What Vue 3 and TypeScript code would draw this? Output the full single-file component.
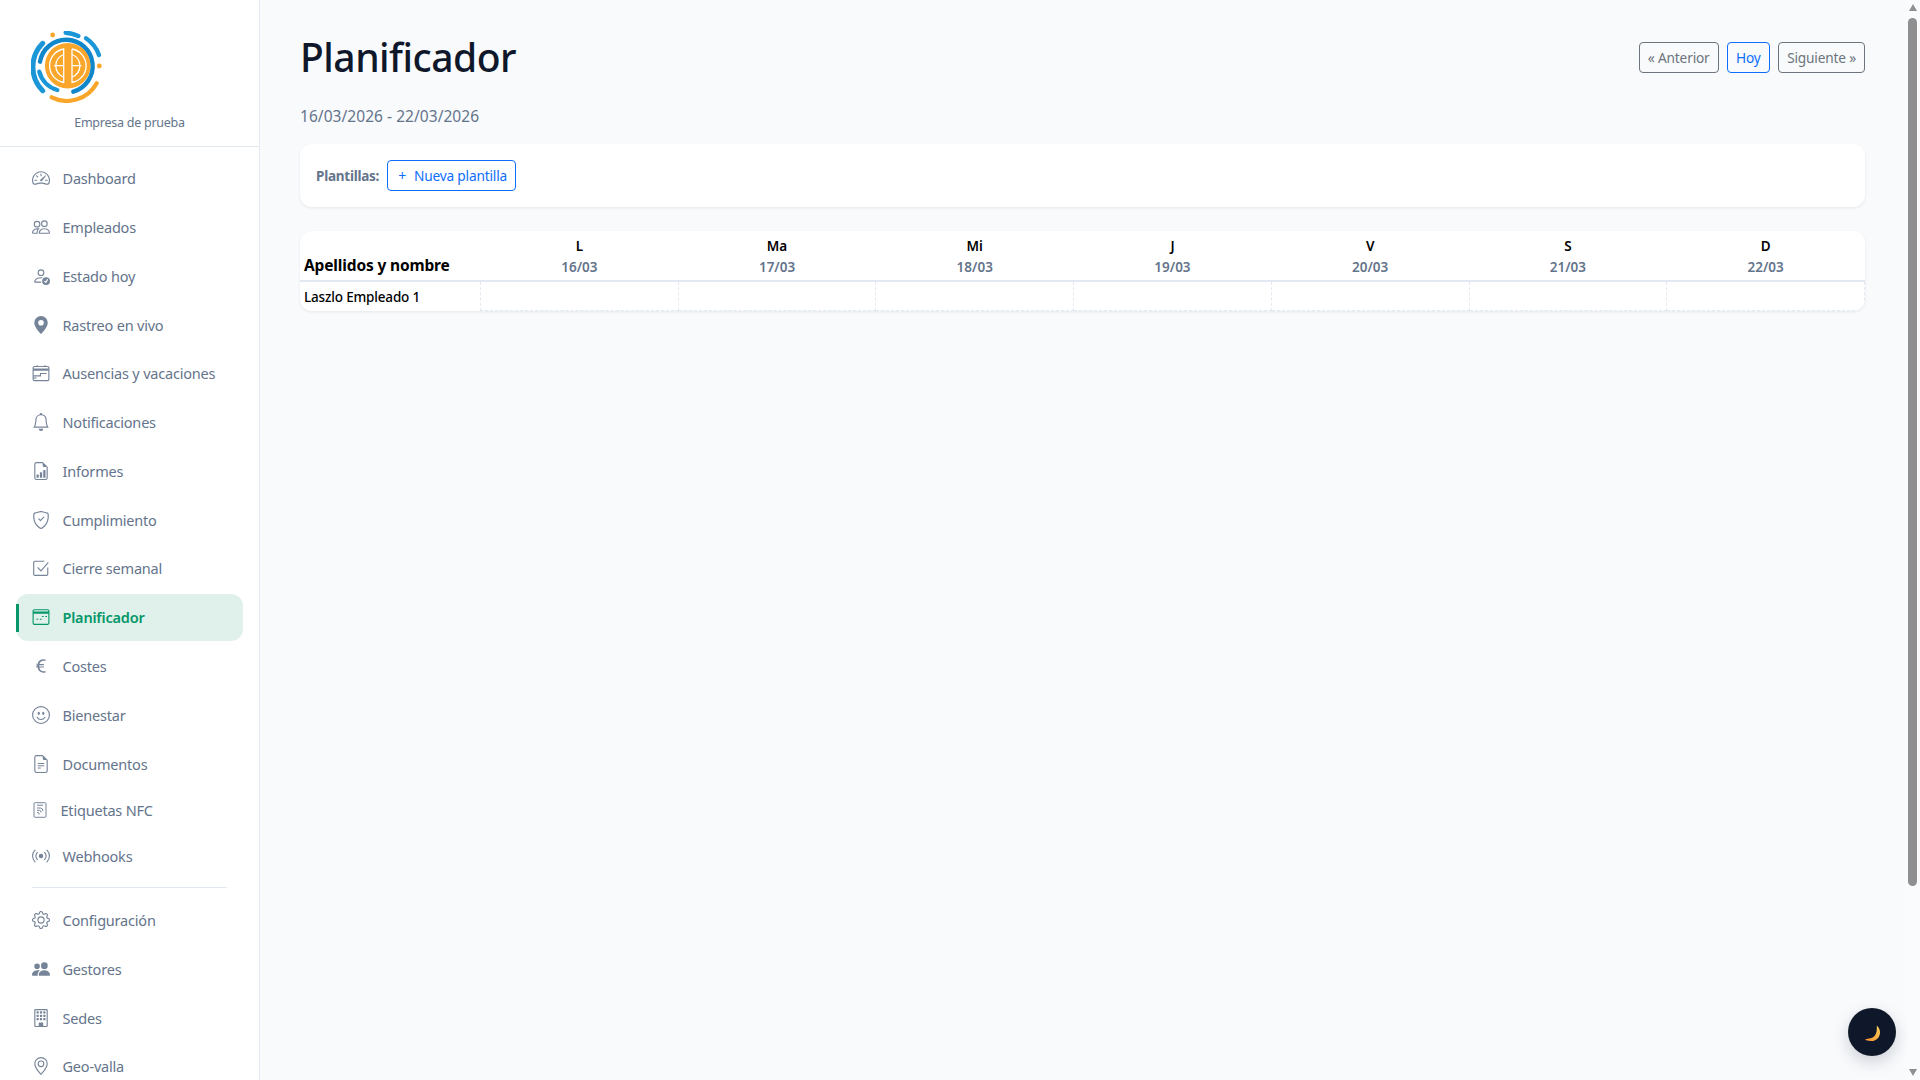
<script setup lang="ts">
interface NavItem {
  label: string
  fill?: string[]
  stroke?: string[]
  cls?: string
}

const navTop: NavItem[] = [
  { label: 'Dashboard', fill: ['M8 4a.5.5 0 0 1 .5.5V6a.5.5 0 0 1-1 0V4.5A.5.5 0 0 1 8 4M3.732 5.732a.5.5 0 0 1 .707 0l.915.914a.5.5 0 1 1-.708.708l-.914-.915a.5.5 0 0 1 0-.707M2 10a.5.5 0 0 1 .5-.5h1.586a.5.5 0 0 1 0 1H2.5A.5.5 0 0 1 2 10m9.5 0a.5.5 0 0 1 .5-.5h1.5a.5.5 0 0 1 0 1H12a.5.5 0 0 1-.5-.5m.754-4.246a.39.39 0 0 0-.527-.02L7.547 9.31a.91.91 0 1 0 1.302 1.258l3.434-4.297a.39.39 0 0 0-.029-.518z', 'M0 10a8 8 0 1 1 15.547 2.661c-.442 1.253-1.845 1.602-2.932 1.25C11.309 13.488 9.475 13 8 13c-1.474 0-3.31.488-4.615.911-1.087.352-2.49.003-2.932-1.25A8 8 0 0 1 0 10m8-7a7 7 0 0 0-6.603 9.329c.203.575.923.876 1.68.63C4.397 12.533 6.358 12 8 12s3.604.532 4.923.96c.757.245 1.477-.056 1.68-.631A7 7 0 0 0 8 3'] },
  { label: 'Empleados', fill: ['M15 14s1 0 1-1-1-4-5-4-5 3-5 4 1 1 1 1zm-7.978-1L7 12.996c.001-.264.167-1.03.76-1.72C8.312 10.629 9.282 10 11 10c1.717 0 2.687.63 3.24 1.276.593.69.758 1.457.76 1.72l-.008.002-.014.002zM11 7a2 2 0 1 0 0-4 2 2 0 0 0 0 4m3-2a3 3 0 1 1-6 0 3 3 0 0 1 6 0M6.936 9.28a6 6 0 0 0-1.23-.247A7 7 0 0 0 5 9c-4 0-5 3-5 4q0 1 1 1h4.216A2.24 2.24 0 0 1 5 13c0-1.01.377-2.042 1.09-2.904.243-.294.526-.569.846-.816M4.92 10A5.5 5.5 0 0 0 4 13H1c0-.26.164-1.03.76-1.724.545-.636 1.492-1.256 3.16-1.275ZM1.5 5.5a3 3 0 1 1 6 0 3 3 0 0 1-6 0m3-2a2 2 0 1 0 0 4 2 2 0 0 0 0-4'] },
  { label: 'Estado hoy', fill: ['M12.5 16a3.5 3.5 0 1 0 0-7 3.5 3.5 0 0 0 0 7m1.679-4.493-1.335 2.226a.75.75 0 0 1-1.174.144l-.774-.773a.5.5 0 0 1 .708-.708l.547.548 1.17-1.951a.5.5 0 1 1 .858.514M11 5a3 3 0 1 1-6 0 3 3 0 0 1 6 0M8 7a2 2 0 1 0 0-4 2 2 0 0 0 0 4', 'M8.256 14a4.5 4.5 0 0 1-.229-1.004H3c.001-.246.154-.986.832-1.664C4.484 10.68 5.711 10 8 10q.39 0 .74.025c.226-.341.496-.65.804-.918Q8.844 9.002 8 9c-5 0-6 3-6 4s1 1 1 1z'] },
  { label: 'Rastreo en vivo', fill: ['M8 16s6-5.686 6-10A6 6 0 0 0 2 6c0 4.314 6 10 6 10m0-7.500a2.500 2.500 0 1 1 0-5 2.500 2.500 0 0 1 0 5'] },
  { label: 'Ausencias y vacaciones', stroke: ['M2.200 2.200h11.600a1.200 1.200 0 0 1 1.200 1.200v10.200a1.200 1.200 0 0 1-1.200 1.200H2.200A1.200 1.200 0 0 1 1 13.600V3.400a1.200 1.200 0 0 1 1.200-1.200z', 'M1 5.600h14M1 4.600h14', 'M4.500 1v1.200M11.500 1v1.200', 'M1 10.500h6.500V8.400h5.500', 'M1 12.400h3'] },
  { label: 'Notificaciones', fill: ['M8 16a2 2 0 0 0 2-2H6a2 2 0 0 0 2 2M8 1.918l-.797.161A4 4 0 0 0 4 6c0 .628-.134 2.197-.459 3.742-.16.767-.376 1.566-.663 2.258h10.244c-.287-.692-.502-1.49-.663-2.258C12.134 8.197 12 6.628 12 6a4 4 0 0 0-3.203-3.92zM14.220 12c.223.447.481.801.78 1H1c.299-.199.557-.553.78-1C2.680 10.200 3 6.880 3 6c0-2.420 1.720-4.440 4.005-4.901a1 1 0 1 1 1.990 0A5 5 0 0 1 13 6c0 .880.320 4.200 1.220 6'] },
  { label: 'Informes', fill: ['M10 13.500a.5.5 0 0 0 .5.5h1a.5.5 0 0 0 .5-.5v-6a.5.5 0 0 0-.5-.5h-1a.5.5 0 0 0-.5.5zm-2.500.5a.5.5 0 0 1-.5-.5v-4a.5.5 0 0 1 .5-.5h1a.5.5 0 0 1 .5.5v4a.5.5 0 0 1-.5.5zm-3 0a.5.5 0 0 1-.5-.5v-2a.5.5 0 0 1 .5-.5h1a.5.5 0 0 1 .5.5v2a.5.5 0 0 1-.5.5z', 'M14 14V4.500L9.500 0H4a2 2 0 0 0-2 2v12a2 2 0 0 0 2 2h8a2 2 0 0 0 2-2M9.500 3A1.500 1.500 0 0 0 11 4.500h2V14a1 1 0 0 1-1 1H4a1 1 0 0 1-1-1V2a1 1 0 0 1 1-1h5.500z'] },
  { label: 'Cumplimiento', fill: ['M5.338 1.59a61 61 0 0 0-2.837.856.48.48 0 0 0-.328.39c-.554 4.157.726 7.19 2.253 9.188a10.7 10.7 0 0 0 2.287 2.233c.346.244.652.42.893.533q.18.085.293.118a1 1 0 0 0 .101.025 1 1 0 0 0 .1-.025q.114-.034.294-.118c.24-.113.547-.29.893-.533a10.7 10.7 0 0 0 2.287-2.233c1.527-1.997 2.807-5.031 2.253-9.188a.48.48 0 0 0-.328-.39c-.651-.213-1.75-.56-2.837-.855C9.552 1.29 8.531 1.067 8 1.067c-.53 0-1.552.223-2.662.524zM5.072.56C6.157.265 7.31 0 8 0s1.843.265 2.928.56c1.11.3 2.229.655 2.887.87a1.54 1.54 0 0 1 1.044 1.262c.596 4.477-.787 7.795-2.465 9.99a11.8 11.8 0 0 1-2.517 2.453 7 7 0 0 1-1.048.625c-.28.132-.581.24-.829.24s-.548-.108-.829-.24a7 7 0 0 1-1.048-.625 11.8 11.8 0 0 1-2.517-2.453C1.928 10.487.545 7.169 1.141 2.692A1.54 1.54 0 0 1 2.185 1.43 63 63 0 0 1 5.072.56', 'M10.854 5.146a.5.5 0 0 1 0 .708l-3 3a.5.5 0 0 1-.708 0l-1.5-1.5a.5.5 0 1 1 .708-.708L7.5 7.793l2.646-2.647a.5.5 0 0 1 .708 0'] },
  { label: 'Cierre semanal', stroke: ['M14 7.500v6a1 1 0 0 1-1 1H2.500a1 1 0 0 1-1-1V3a1 1 0 0 1 1-1H11', 'M5 7.500l3 3 6.500-7.500'] },
  { label: 'Planificador', cls: 'active', stroke: ['M2.200 1.500h11.600a1.200 1.200 0 0 1 1.200 1.200v10.600a1.200 1.200 0 0 1-1.200 1.200H2.200A1.200 1.200 0 0 1 1 13.300V2.700a1.200 1.200 0 0 1 1.200-1.200z', 'M1 4.500h14M1 3.500h14', 'M4 10h1.500M7 10h1.500M8.800 7.500h1.500M11.800 7.500h1.500'] },
  { label: 'Costes', fill: ['M4 9.420h1.063C5.400 12.323 7.317 14 10.340 14c.622 0 1.167-.068 1.659-.185v-1.300c-.484.119-1.045.170-1.659.170-2.100 0-3.455-1.198-3.775-3.264h4.017v-.928H6.497v-.936q-.002-.165.008-.329h4.078v-.927H6.618c.388-1.898 1.719-2.985 3.723-2.985.614 0 1.175.050 1.659.177V2.194A6.600 6.600 0 0 0 10.341 2c-2.928 0-4.820 1.569-5.244 3.957H4v.928h1.010v.100q-.002.113.003.267H4z'] },
  { label: 'Bienestar', fill: ['M8 15A7 7 0 1 1 8 1a7 7 0 0 1 0 14m0 1A8 8 0 1 0 8 0a8 8 0 0 0 0 16', 'M4.285 9.567a.5.5 0 0 1 .683.183A3.500 3.500 0 0 0 8 11.500a3.500 3.500 0 0 0 3.032-1.750.5.5 0 1 1 .866.5A4.500 4.500 0 0 1 8 12.500a4.500 4.500 0 0 1-3.898-2.250.5.5 0 0 1 .183-.683M7 6.500C7 7.328 6.552 8 6 8s-1-.672-1-1.500S5.448 5 6 5s1 .672 1 1.500m4 0c0 .828-.448 1.500-1 1.500s-1-.672-1-1.500S9.448 5 10 5s1 .672 1 1.500'] },
  { label: 'Documentos', fill: ['M5.500 7a.5.5 0 0 0 0 1h5a.5.5 0 0 0 0-1zM5 9.500a.5.5 0 0 1 .5-.5h5a.5.5 0 0 1 0 1h-5a.5.5 0 0 1-.5-.5m0 2a.5.5 0 0 1 .5-.5h2a.5.5 0 0 1 0 1h-2a.5.5 0 0 1-.5-.5', 'M9.500 0H4a2 2 0 0 0-2 2v12a2 2 0 0 0 2 2h8a2 2 0 0 0 2-2V4.500zm0 1v2A1.500 1.500 0 0 0 11 4.500h2V14a1 1 0 0 1-1 1H4a1 1 0 0 1-1-1V2a1 1 0 0 1 1-1z'] },
  { label: 'Etiquetas NFC', cls: 'compact', stroke: ['M3.200 .7h9.600a1.200 1.200 0 0 1 1.200 1.200v12.200a1.200 1.200 0 0 1-1.200 1.200H3.200A1.200 1.200 0 0 1 2 14.100V1.900A1.200 1.200 0 0 1 3.200 .7z', 'M5 3.200h6', 'M5 6h3.500a3 3 0 0 1 2.500 3', 'M5 8.300h2.500a2 2 0 0 1 1.600 2.200', 'M5 10.600h1a1 1 0 0 1 1 1v1'] },
  { label: 'Webhooks', cls: 'compact plain', fill: ['M3.050 3.050a7 7 0 0 0 0 9.900.5.5 0 0 1-.707.707 8 8 0 0 1 0-11.314.5.5 0 0 1 .707.707m2.122 2.122a4 4 0 0 0 0 5.656.5.5 0 1 1-.708.708 5 5 0 0 1 0-7.072.5.5 0 0 1 .708.708m5.656-.708a.5.5 0 0 1 .708 0 5 5 0 0 1 0 7.072.5.5 0 1 1-.708-.708 4 4 0 0 0 0-5.656.5.5 0 0 1 0-.708m2.122-2.120a.5.5 0 0 1 .707 0 8 8 0 0 1 0 11.313.5.5 0 0 1-.707-.707 7 7 0 0 0 0-9.900.5.5 0 0 1 0-.707zM10 8a2 2 0 1 1-4 0 2 2 0 0 1 4 0'] },
]

const navBottom: NavItem[] = [
  { label: 'Configuración', fill: ['M8 4.754a3.246 3.246 0 1 0 0 6.492 3.246 3.246 0 0 0 0-6.492M5.754 8a2.246 2.246 0 1 1 4.492 0 2.246 2.246 0 0 1-4.492 0', 'M9.796 1.343c-.527-1.79-3.065-1.79-3.592 0l-.094.319a.873.873 0 0 1-1.255.52l-.292-.16c-1.64-.892-3.433.902-2.54 2.541l.159.292a.873.873 0 0 1-.52 1.255l-.319.094c-1.79.527-1.79 3.065 0 3.592l.319.094a.873.873 0 0 1 .52 1.255l-.16.292c-.892 1.64.901 3.434 2.541 2.54l.292-.159a.873.873 0 0 1 1.255.52l.094.319c.527 1.79 3.065 1.79 3.592 0l.094-.319a.873.873 0 0 1 1.255-.52l.292.16c1.64.893 3.434-.902 2.54-2.541l-.159-.292a.873.873 0 0 1 .52-1.255l.319-.094c1.79-.527 1.79-3.065 0-3.592l-.319-.094a.873.873 0 0 1-.52-1.255l.16-.292c.893-1.64-.902-3.433-2.541-2.54l-.292.159a.873.873 0 0 1-1.255-.52zm-2.633.283c.246-.835 1.428-.835 1.674 0l.094.319a1.873 1.873 0 0 0 2.693 1.115l.291-.16c.764-.415 1.6.42 1.184 1.185l-.159.292a1.873 1.873 0 0 0 1.116 2.692l.318.094c.835.246.835 1.428 0 1.674l-.319.094a1.873 1.873 0 0 0-1.115 2.693l.16.291c.415.764-.42 1.6-1.185 1.184l-.291-.159a1.873 1.873 0 0 0-2.693 1.116l-.094.318c-.246.835-1.428.835-1.674 0l-.094-.319a1.873 1.873 0 0 0-2.692-1.115l-.292.16c-.764.415-1.6-.42-1.184-1.185l.159-.291A1.873 1.873 0 0 0 1.945 8.93l-.319-.094c-.835-.246-.835-1.428 0-1.674l.319-.094A1.873 1.873 0 0 0 3.06 4.377l-.16-.292c-.415-.764.42-1.6 1.185-1.184l.292.159a1.873 1.873 0 0 0 2.692-1.115z'] },
  { label: 'Gestores', fill: ['M7 14s-1 0-1-1 1-4 5-4 5 3 5 4-1 1-1 1zm4-6a3 3 0 1 0 0-6 3 3 0 0 0 0 6m-5.784 6A2.24 2.24 0 0 1 5 13c0-1.355.68-2.75 1.936-3.72A6.3 6.3 0 0 0 5 9c-4 0-5 3-5 4s1 1 1 1zM4.500 8a2.500 2.500 0 1 0 0-5 2.500 2.500 0 0 0 0 5'] },
  { label: 'Sedes', fill: ['M4 2.500a.5.5 0 0 1 .5-.5h1a.5.5 0 0 1 .5.5v1a.5.5 0 0 1-.5.5h-1a.5.5 0 0 1-.5-.5zm3 0a.5.5 0 0 1 .5-.5h1a.5.5 0 0 1 .5.5v1a.5.5 0 0 1-.5.5h-1a.5.5 0 0 1-.5-.5zm3.500-.5a.5.5 0 0 0-.5.5v1a.5.5 0 0 0 .5.5h1a.5.5 0 0 0 .5-.5v-1a.5.5 0 0 0-.5-.5zM4 5.500a.5.5 0 0 1 .5-.5h1a.5.5 0 0 1 .5.5v1a.5.5 0 0 1-.5.5h-1a.5.5 0 0 1-.5-.5zM7.500 5a.5.5 0 0 0-.5.5v1a.5.5 0 0 0 .5.5h1a.5.5 0 0 0 .5-.5v-1a.5.5 0 0 0-.5-.5zm2.500.5a.5.5 0 0 1 .5-.5h1a.5.5 0 0 1 .5.5v1a.5.5 0 0 1-.5.5h-1a.5.5 0 0 1-.5-.5zM4.500 8a.5.5 0 0 0-.5.5v1a.5.5 0 0 0 .5.5h1a.5.5 0 0 0 .5-.5v-1a.5.5 0 0 0-.5-.5zm2.500.5a.5.5 0 0 1 .5-.5h1a.5.5 0 0 1 .5.5v1a.5.5 0 0 1-.5.5h-1a.5.5 0 0 1-.5-.5zm3.500-.5a.5.5 0 0 0-.5.5v1a.5.5 0 0 0 .5.5h1a.5.5 0 0 0 .5-.5v-1a.5.5 0 0 0-.5-.5z', 'M2 1a1 1 0 0 1 1-1h10a1 1 0 0 1 1 1v14a1 1 0 0 1-1 1H3a1 1 0 0 1-1-1zm11 0H3v14h3v-2.500a.5.5 0 0 1 .5-.5h3a.5.5 0 0 1 .5.5V15h3z'] },
  { label: 'Geo-valla', fill: ['M12.166 8.94c-.524 1.062-1.234 2.12-1.96 3.07A32 32 0 0 1 8 14.58a32 32 0 0 1-2.206-2.57c-.726-.95-1.436-2.008-1.96-3.07C3.304 7.867 3 6.862 3 6a5 5 0 0 1 10 0c0 .862-.305 1.867-.834 2.94M8 16s6-5.686 6-10A6 6 0 0 0 2 6c0 4.314 6 10 6 10', 'M8 8a2 2 0 1 1 0-4 2 2 0 0 1 0 4m0 1a3 3 0 1 0 0-6 3 3 0 0 0 0 6'] },
]

const days = [
  { d: 'L', date: '16/03' },
  { d: 'Ma', date: '17/03' },
  { d: 'Mi', date: '18/03' },
  { d: 'J', date: '19/03' },
  { d: 'V', date: '20/03' },
  { d: 'S', date: '21/03' },
  { d: 'D', date: '22/03' },
]
</script>

<template>
  <div class="layout">
    <aside class="sidebar">
      <div class="brand">
        <svg class="logo" viewBox="0 0 72 72" fill="none" stroke-linecap="round">
          <g stroke="#1b96d6">
            <path d="M11.700 12.300A33.500 33.500 0 0 0 11.700 59.700" stroke-width="5" />
            <path d="M34.700 1.700A34 34 0 0 1 47.300 5" stroke-width="4.400" />
            <path d="M55 7.300A34 34 0 0 1 68 24" stroke-width="4.400" />
            <path d="M26.300 59A26 26 0 0 1 8.300 40.700" stroke-width="4.400" />
            <path d="M9 30.700A26.500 26.500 0 1 1 42.300 60.700" stroke-width="4.400" stroke="#1086cb" />
          </g>
          <circle cx="36.700" cy="34.700" r="22.800" fill="#f9a62b" />
          <g stroke="#fff" stroke-width="1.300" stroke-linecap="butt">
            <path d="M32.700 51.500A17 17 0 0 1 32.700 18V52" />
            <path d="M32.700 23.500A12 12 0 0 0 32.700 46" />
            <path d="M41 18V52M41 18A17 17 0 0 1 41 51.500" />
            <path d="M41 23.500A12 12 0 0 1 41 46" />
            <path d="M23 34.700H32.700M41 34.700H50.500" />
          </g>
          <path d="M20.700 66.300A34 34 0 0 0 65.700 52.300" stroke="#f9a62b" stroke-width="4.200" />
          <circle cx="21.700" cy="4" r="2.400" fill="#f9a62b" />
          <circle cx="68.300" cy="35" r="2.400" fill="#f9a62b" />
        </svg>
        <div class="company">Empresa de prueba</div>
      </div>
      <nav class="nav">
        <a v-for="item in navTop" :key="item.label" class="nav-item" :class="item.cls">
          <svg class="icon" viewBox="0 0 16 16">
            <path v-for="p in item.fill" :key="p" :d="p" fill="currentColor" fill-rule="evenodd" />
            <path v-for="p in item.stroke" :key="p" :d="p" fill="none" stroke="currentColor" stroke-width="1" />
          </svg>
          <span>{{ item.label }}</span>
        </a>
        <div class="nav-divider"></div>
        <a v-for="item in navBottom" :key="item.label" class="nav-item">
          <svg class="icon" viewBox="0 0 16 16">
            <path v-for="p in item.fill" :key="p" :d="p" fill="currentColor" fill-rule="evenodd" />
          </svg>
          <span>{{ item.label }}</span>
        </a>
      </nav>
    </aside>

    <main class="main">
      <header class="page-head">
        <h1>Planificador</h1>
        <div class="actions">
          <button class="btn">« Anterior</button>
          <button class="btn primary today">Hoy</button>
          <button class="btn">Siguiente »</button>
        </div>
      </header>
      <p class="range">16/03/2026 - 22/03/2026</p>

      <section class="card templates">
        <strong>Plantillas:</strong>
        <button class="btn primary new"><span class="plus">+</span>Nueva plantilla</button>
      </section>

      <section class="card table-card">
        <table>
          <thead>
            <tr>
              <th class="name-h">Apellidos y nombre</th>
              <th v-for="x in days" :key="x.d" class="day-h">
                <div class="day">{{ x.d }}</div>
                <div class="date">{{ x.date }}</div>
              </th>
            </tr>
          </thead>
          <tbody>
            <tr>
              <td class="name">Laszlo Empleado 1</td>
              <td v-for="x in days" :key="x.d" class="slot"></td>
            </tr>
          </tbody>
        </table>
      </section>
    </main>

    <div class="scrollbar" aria-hidden="true">
      <span class="arrow up"></span>
      <span class="thumb"></span>
      <span class="arrow down"></span>
    </div>

    <button class="theme" aria-label="Cambiar tema">
      <svg viewBox="0 0 20 20" width="20" height="20">
        <defs>
          <linearGradient id="moon" x1="0" y1="1" x2="1" y2="0">
            <stop offset="0" stop-color="#f4902a" />
            <stop offset="1" stop-color="#fdd25e" />
          </linearGradient>
        </defs>
        <path d="M13.800 1.500c3.400 3 4.200 7.800 2 11.400-2.200 3.700-7 5.300-12.600 3.400-.8-.3-1-1-.3-1.300 2.300-.2 6.300-.3 8.800-3.200 2.300-2.700 2.200-6.600 2.100-10.300z" fill="url(#moon)" />
      </svg>
    </button>
  </div>
</template>

<style>
body {
  margin: 0;
  background: #f8fafc;
}
</style>

<style scoped>
.layout {
  position: relative;
  display: flex;
  height: 1080px;
  overflow: hidden;
  background: #f8fafc;
  font-family: "Noto Sans", "Liberation Sans", sans-serif;
}
.sidebar {
  flex: 0 0 260px;
  box-sizing: border-box;
  height: 1080px;
  overflow: hidden;
  background: #fff;
  border-right: 1px solid #e2e8f0;
}
.brand {
  box-sizing: border-box;
  height: 147px;
  padding: 31px 0 0 31px;
  border-bottom: 1px solid #e2e8f0;
}
.logo {
  display: block;
  width: 72px;
  height: 72px;
}
.company {
  margin: 11px 0 0 -31px;
  text-align: center;
  font-size: 12.500px;
  line-height: 18px;
  letter-spacing: -0.25px;
  color: #64748b;
}
.nav {
  padding: 7.800px 16px 0;
}
.nav-item {
  position: relative;
  display: flex;
  align-items: center;
  height: 46.900px;
  margin-bottom: 1.900px;
  padding-left: 16px;
  border-radius: 12px;
  font-size: 14.500px;
  letter-spacing: -0.2px;
  color: #64748b;
}
.icon {
  flex: 0 0 18px;
  width: 18px;
  height: 18px;
  margin-right: 12.500px;
  opacity: 0.88;
}
.nav-item.compact {
  height: 43px;
  margin-bottom: 3px;
}
.nav-item.compact:not(.plain) .icon {
  flex-basis: 16px;
  width: 16px;
  height: 16px;
  margin-right: 12.500px;
}
.nav-item.active {
  background: #dff1ea;
  color: #059669;
  font-weight: 600;
}
.nav-item.active .icon {
  opacity: 1;
}
.nav-item.active::before {
  content: "";
  position: absolute;
  left: 0;
  top: 10px;
  bottom: 9px;
  width: 3px;
  background: #059669;
}
.nav-divider {
  height: 1px;
  margin: 9.200px 16px 8.400px;
  background: #e2e8f0;
}
.main {
  flex: 1;
  min-width: 0;
  padding: 33px 40px 0;
}
.page-head {
  display: flex;
  align-items: center;
  justify-content: space-between;
}
h1 {
  margin: 0;
  font-size: 39px;
  line-height: 48px;
  font-weight: 500;
  letter-spacing: -0.5px;
  color: #0f172a;
}
.actions {
  display: flex;
  gap: 8px;
}
.btn {
  box-sizing: border-box;
  height: 31px;
  padding: 0 8px;
  background: transparent;
  border: 1px solid #6c757d;
  border-radius: 4px;
  font: inherit;
  font-size: 13.700px;
  letter-spacing: -0.18px;
  color: #6c757d;
}
.btn.primary {
  border-color: #0d6efd;
  color: #0d6efd;
}
.btn.today {
  padding: 0 8.500px;
}
.range {
  margin: 23px 0 0;
  font-size: 15.500px;
  line-height: 24px;
  letter-spacing: 0.05px;
  color: #64748b;
}
.card {
  background: #fff;
  border-radius: 12px;
  box-shadow: 0 1px 3px rgba(15, 23, 42, 0.08);
}
.templates {
  display: flex;
  align-items: center;
  gap: 8px;
  height: 63px;
  margin-top: 16px;
  padding: 0 16px;
}
.templates strong {
  font-size: 13.500px;
  letter-spacing: -0.25px;
  font-weight: 700;
  color: #64748b;
}
.plus {
  margin: 0 8px 0 2px;
  font-size: 14px;
}
.table-card {
  margin-top: 24px;
  overflow: hidden;
}
table {
  width: 100%;
  table-layout: fixed;
  border-collapse: collapse;
  color: #000;
}
thead tr {
  height: 50px;
  border-bottom: 2px solid #e2e8f0;
}
.name-h {
  box-sizing: border-box;
  width: 180.500px;
  padding: 0 0 4px 4px;
  text-align: left;
  vertical-align: bottom;
  font-size: 15.500px;
  line-height: 22px;
  letter-spacing: -0.15px;
}
.day-h {
  padding: 1px 0 0;
  text-align: center;
}
.day {
  font-size: 13.500px;
  line-height: 21px;
  font-weight: 600;
}
.date {
  font-size: 13.500px;
  line-height: 20px;
  font-weight: 600;
  color: #64748b;
}
.name {
  box-sizing: border-box;
  height: 29px;
  padding: 1px 4px 0;
  font-size: 13.500px;
  letter-spacing: -0.17px;
  font-weight: 500;
}
.slot {
  padding: 0;
  border: 1px dashed #e2e8f0;
  border-top: 0;
}
.scrollbar {
  flex: 0 0 15px;
  display: flex;
  flex-direction: column;
  align-items: center;
  background: #fafbfd;
}
.arrow {
  width: 0;
  height: 0;
  border-left: 4.500px solid transparent;
  border-right: 4.500px solid transparent;
}
.arrow.up {
  margin-top: 4px;
  border-bottom: 7px solid #8f8f8f;
}
.arrow.down {
  margin-top: 183px;
  border-top: 7px solid #8f8f8f;
}
.thumb {
  width: 9px;
  height: 868px;
  margin-top: 6.500px;
  border-radius: 5px;
  background: #8f8f8f;
}
.theme {
  position: absolute;
  right: 24px;
  bottom: 24px;
  display: flex;
  align-items: center;
  justify-content: center;
  width: 48px;
  height: 48px;
  padding: 4px 0 0 2px;
  border: 0;
  border-radius: 50%;
  background: #0f172a;
  box-shadow: 0 6px 16px rgba(15, 23, 42, 0.18);
}
</style>
